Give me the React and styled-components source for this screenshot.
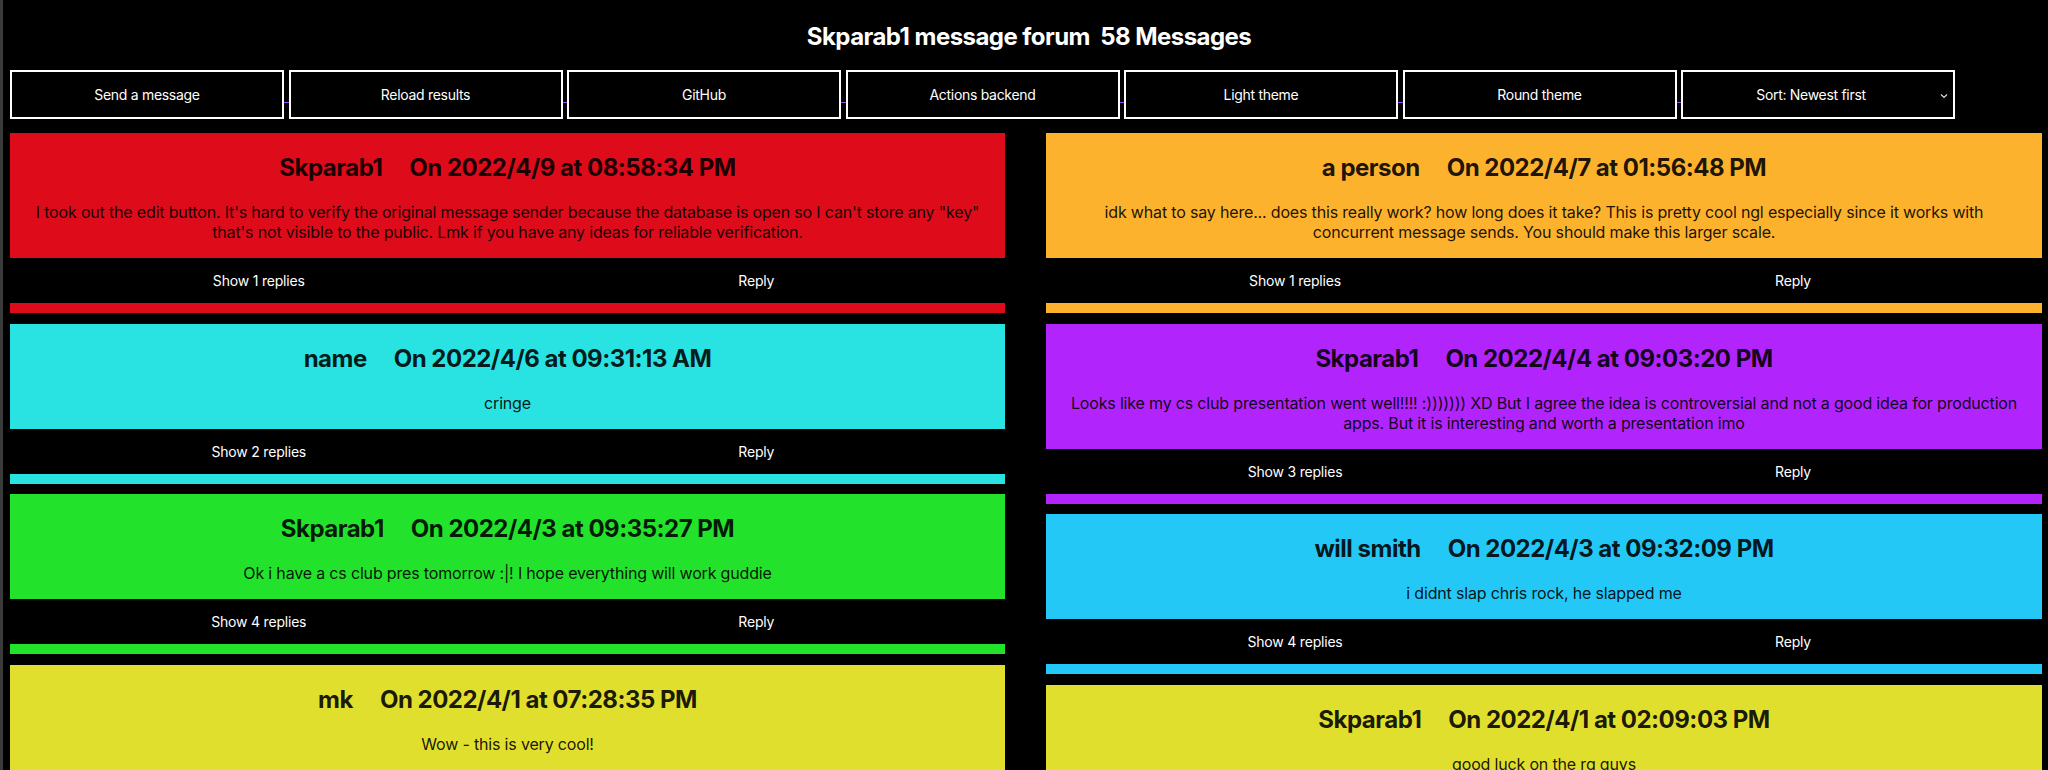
import styled, { createGlobalStyle } from 'styled-components'

const GlobalStyle = createGlobalStyle`
    html, body {
        margin: 0;
        background: #000;
    }
    body {
        font-family: Inter, "Noto Sans", sans-serif;
        color: #fff;
    }
`

const leftColumn = [
    {
        color: '#de0b1b',
        author: 'Skparab1',
        date: 'On 2022/4/9 at 08:58:34 PM',
        text: 'I took out the edit button. It\'s hard to verify the original message sender because the database is open so I can\'t store any "key" that\'s not visible to the public. Lmk if you have any ideas for reliable verification.',
        replies: 1,
    },
    {
        color: '#29e2e2',
        author: 'name',
        date: 'On 2022/4/6 at 09:31:13 AM',
        text: 'cringe',
        replies: 2,
    },
    {
        color: '#22e22b',
        author: 'Skparab1',
        date: 'On 2022/4/3 at 09:35:27 PM',
        text: 'Ok i have a cs club pres tomorrow :|! I hope everything will work guddie',
        replies: 4,
    },
    {
        color: '#e0df2e',
        author: 'mk',
        date: 'On 2022/4/1 at 07:28:35 PM',
        text: 'Wow - this is very cool!',
        replies: 1,
    },
]

const rightColumn = [
    {
        color: '#fdb22d',
        author: 'a person',
        date: 'On 2022/4/7 at 01:56:48 PM',
        text: 'idk what to say here... does this really work? how long does it take? This is pretty cool ngl especially since it works with concurrent message sends. You should make this larger scale.',
        replies: 1,
    },
    {
        color: '#b125fc',
        author: 'Skparab1',
        date: 'On 2022/4/4 at 09:03:20 PM',
        text: 'Looks like my cs club presentation went well!!!! :))))))) XD But I agree the idea is controversial and not a good idea for production apps. But it is interesting and worth a presentation imo',
        replies: 3,
    },
    {
        color: '#23c8f7',
        author: 'will smith',
        date: 'On 2022/4/3 at 09:32:09 PM',
        text: 'i didnt slap chris rock, he slapped me',
        replies: 4,
    },
    {
        color: '#e0df2e',
        author: 'Skparab1',
        date: 'On 2022/4/1 at 02:09:03 PM',
        text: 'good luck on the rg guys',
        replies: 2,
    },
]

const buttons = ['Send a message', 'Reload results', 'GitHub', 'Actions backend', 'Light theme', 'Round theme']

export default function App() {
    return (
        <Page>
            <GlobalStyle />
            <Title>Skparab1 message forum&nbsp; 58 Messages</Title>

            <Toolbar>
                {buttons.map(label => (
                    <ToolButton key={label}>{label}</ToolButton>
                ))}
                <SortBox>
                    Sort: Newest first
                    <Chevron viewBox="0 0 8 6">
                        <path d="M1 1.5 L4 4.5 L7 1.5" />
                    </Chevron>
                </SortBox>
            </Toolbar>

            <Columns>
                {[leftColumn, rightColumn].map((column, i) => (
                    <Column key={i}>
                        {column.map(msg => (
                            <Card key={msg.date} $color={msg.color}>
                                <CardBody>
                                    <CardTitle>
                                        <Author>{msg.author}</Author>
                                        {msg.date}
                                    </CardTitle>
                                    <Message>{msg.text}</Message>
                                </CardBody>
                                <Actions>
                                    <ActionButton>Show {msg.replies} replies</ActionButton>
                                    <ActionButton>Reply</ActionButton>
                                </Actions>
                            </Card>
                        ))}
                    </Column>
                ))}
            </Columns>
        </Page>
    )
}

const Page = styled.div`
    height: 770px;
    overflow: hidden;
    box-sizing: border-box;
    border-left: 3px solid #3a3a3a;
    padding: 22px 0 0 7px;
`

const Title = styled.h1`
    margin: 0 0 19px;
    font-size: 24px;
    line-height: 29px;
    font-weight: 700;
    letter-spacing: -0.55px;
    text-align: center;
`

const Toolbar = styled.div`
    display: inline-flex;
    gap: 4.5px;
    background: linear-gradient(
        to bottom,
        transparent 32px,
        #9a47ff 32px,
        #9a47ff 33px,
        transparent 33px
    );
`

const ToolButton = styled.button`
    width: 274px;
    height: 49px;
    box-sizing: border-box;
    border: 2px solid #fff;
    background: #000;
    color: #fff;
    font-family: inherit;
    font-size: 14px;
    letter-spacing: -0.3px;
    padding: 0;
`

const SortBox = styled.div`
    position: relative;
    width: 274px;
    height: 49px;
    box-sizing: border-box;
    border: 2px solid #fff;
    background: #000;
    font-size: 14px;
    letter-spacing: -0.3px;
    display: flex;
    align-items: center;
    justify-content: center;
    padding-right: 14px;
`

const Chevron = styled.svg`
    position: absolute;
    right: 5px;
    top: 21px;
    width: 8px;
    height: 6px;
    fill: none;
    stroke: #ddd;
    stroke-width: 1.2;
`

const Columns = styled.div`
    display: grid;
    grid-template-columns: 995px 996px;
    column-gap: 41px;
    margin-top: 14px;
`

const Column = styled.div`
    display: flex;
    flex-direction: column;
    gap: 10.5px;
`

const Card = styled.article`
    background: ${p => p.$color};
    padding-bottom: 10px;
`

const CardBody = styled.div`
    padding: 20px 24.5px 16px;
    text-align: center;
    color: rgba(0, 0, 0, 0.9);
`

const CardTitle = styled.h2`
    margin: 0 0 20px;
    font-size: 24px;
    line-height: 29px;
    font-weight: 700;
    letter-spacing: -0.5px;
`

const Author = styled.span`
    margin-right: 27px;
`

const Message = styled.p`
    margin: 0;
    font-size: 16px;
    line-height: 20px;
    letter-spacing: -0.17px;
`

const Actions = styled.div`
    display: grid;
    grid-template-columns: 1fr 1fr;
    height: 45px;
    background: #000;
`

const ActionButton = styled.button`
    border: none;
    background: none;
    color: #fff;
    font-family: inherit;
    font-size: 14px;
    letter-spacing: -0.2px;
    padding: 0;
`
